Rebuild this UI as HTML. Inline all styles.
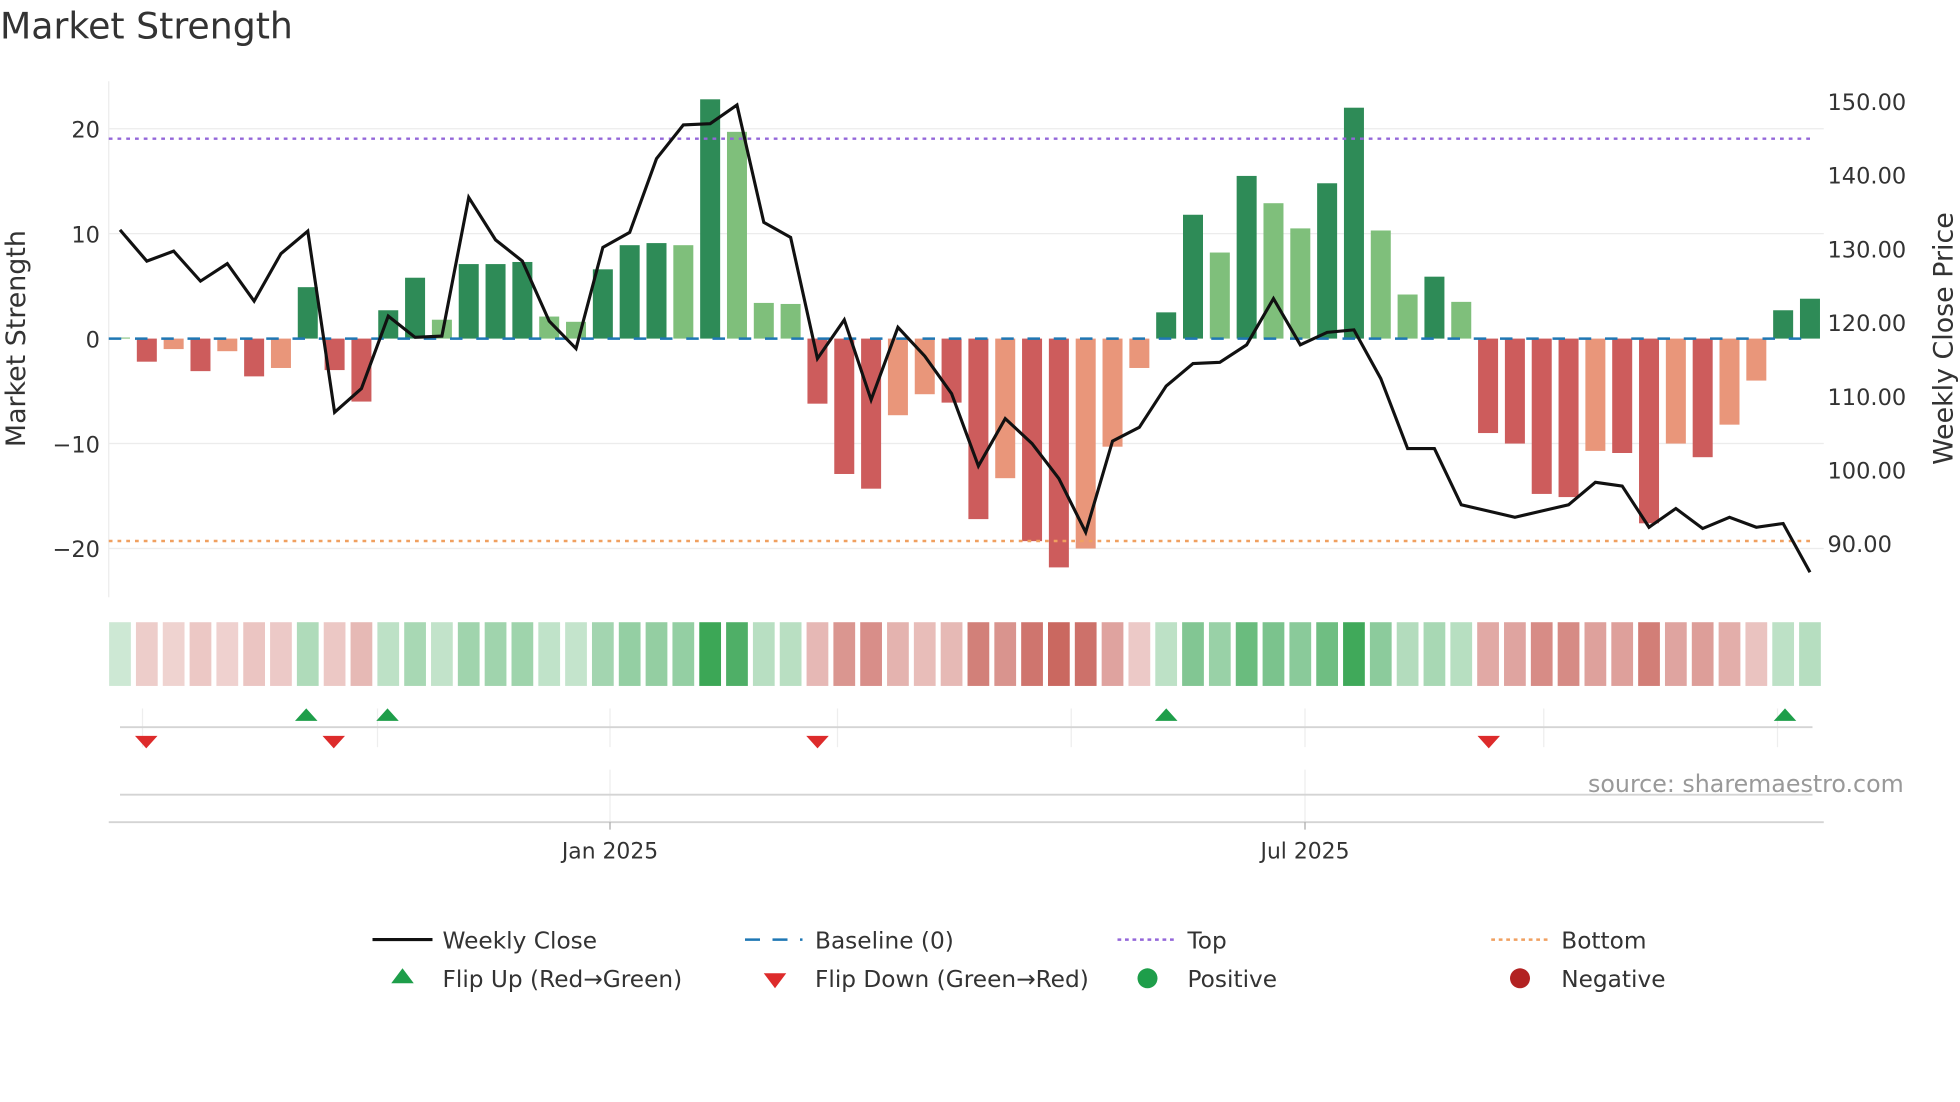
<!DOCTYPE html>
<html><head><meta charset="utf-8"><style>
html,body{margin:0;padding:0;background:#fff;width:1960px;height:1102px;overflow:hidden}
svg{display:block}
text{font-family:"DejaVu Sans","Liberation Sans",sans-serif}
</style></head><body>
<svg id="s" width="1960" height="1102" viewBox="0 0 1568 882" preserveAspectRatio="none" xmlns="http://www.w3.org/2000/svg">
<rect width="1568" height="882" fill="#fff"/>
<text x="0" y="31" font-size="29" fill="#333">Market Strength</text>
<g stroke="#ececec" stroke-width="1">
<line x1="87" x2="1459" y1="103" y2="103"/><line x1="87" x2="1459" y1="187" y2="187"/>
<line x1="87" x2="1459" y1="355" y2="355"/><line x1="87" x2="1459" y1="439" y2="439"/>
<line x1="87" x2="87" y1="65" y2="478"/>
</g>
<g font-size="18" fill="#333" text-anchor="end">
<text x="80" y="110">20</text><text x="80" y="194">10</text><text x="80" y="278">0</text>
<text x="80" y="362">−10</text><text x="80" y="446">−20</text>
</g>
<g font-size="18" fill="#333">
<text x="1462" y="88">150.00</text><text x="1462" y="147">140.00</text><text x="1462" y="206">130.00</text>
<text x="1462" y="265">120.00</text><text x="1462" y="324">110.00</text><text x="1462" y="383">100.00</text><text x="1462" y="442">90.00</text>
</g>
<text transform="translate(20,271) rotate(-90)" font-size="21.5" fill="#333" text-anchor="middle">Market Strength</text>
<text transform="translate(1562,271) rotate(-90)" font-size="21.5" fill="#333" text-anchor="middle">Weekly Close Price</text>
<g id="bars"></g>
<line x1="87" x2="1450" y1="271" y2="271" stroke="#1f77b4" stroke-width="2" stroke-dasharray="10,11"/>
<line x1="87" x2="1450" y1="111" y2="111" stroke="#9467d9" stroke-width="2" stroke-dasharray="3,4"/>
<line x1="87" x2="1450" y1="433" y2="433" stroke="#f0a060" stroke-width="2" stroke-dasharray="3,4"/>
<polyline id="price" fill="none" stroke="#111" stroke-width="2.5" stroke-linejoin="miter"/>
<g id="heat"></g>
<g stroke="#eee" stroke-width="1">
<line x1="114" x2="114" y1="567" y2="598"/><line x1="302" x2="302" y1="567" y2="598"/><line x1="488" x2="488" y1="567" y2="598"/>
<line x1="670" x2="670" y1="567" y2="598"/><line x1="857" x2="857" y1="567" y2="598"/><line x1="1044" x2="1044" y1="567" y2="598"/>
<line x1="1235" x2="1235" y1="567" y2="598"/><line x1="1422" x2="1422" y1="567" y2="598"/>
<line x1="488" x2="488" y1="616" y2="658"/><line x1="1044" x2="1044" y1="616" y2="658"/>
</g>
<line x1="96" x2="1450" y1="582" y2="582" stroke="#d4d4d4" stroke-width="1.5"/>
<line x1="96" x2="1450" y1="636" y2="636" stroke="#d4d4d4" stroke-width="1.5"/>
<line x1="87" x2="1459" y1="658" y2="658" stroke="#d4d4d4" stroke-width="1.5"/>
<line x1="488" x2="488" y1="658" y2="664" stroke="#aaa"/><line x1="1044" x2="1044" y1="658" y2="664" stroke="#aaa"/>
<g fill="#1e9e4a">
<path d="M245 567 l-9 10 h18z"/><path d="M310 567 l-9 10 h18z"/><path d="M933 567 l-9 10 h18z"/><path d="M1428 567 l-9 10 h18z"/>
</g>
<g fill="#dd2b2b">
<path d="M117 599 l-9 -10 h18z"/><path d="M267 599 l-9 -10 h18z"/><path d="M654 599 l-9 -10 h18z"/><path d="M1191 599 l-9 -10 h18z"/>
</g>
<text x="1523" y="634" font-size="19" fill="#999" text-anchor="end">source: sharemaestro.com</text>
<text x="488" y="687" font-size="17.5" fill="#333" text-anchor="middle">Jan 2025</text>
<text x="1044" y="687" font-size="17.5" fill="#333" text-anchor="middle">Jul 2025</text>
<g font-size="18.6" fill="#333">
<line x1="298" x2="346" y1="752" y2="752" stroke="#111" stroke-width="2.5"/><text x="354" y="759">Weekly Close</text>
<line x1="596" x2="642" y1="752" y2="752" stroke="#1f77b4" stroke-width="2" stroke-dasharray="12,10"/><text x="652" y="759">Baseline (0)</text>
<line x1="894" x2="940" y1="752" y2="752" stroke="#9467d9" stroke-width="2" stroke-dasharray="3,3"/><text x="950" y="759">Top</text>
<line x1="1193" x2="1239" y1="752" y2="752" stroke="#f0a060" stroke-width="2" stroke-dasharray="3,3"/><text x="1249" y="759">Bottom</text>
<path d="M322 775 l-9 12 h18z" fill="#1e9e4a"/><text x="354" y="790">Flip Up (Red→Green)</text>
<path d="M620 791 l-9 -12 h18z" fill="#dd2b2b"/><text x="652" y="790">Flip Down (Green→Red)</text>
<circle cx="918" cy="783" r="8" fill="#1e9e4a"/><text x="950" y="790">Positive</text>
<circle cx="1216" cy="783" r="8" fill="#b22222"/><text x="1249" y="790">Negative</text>
</g>
</svg>
<script>
var v=[0.1,-2.2,-1,-3.1,-1.2,-3.6,-2.8,4.9,-3,-6,2.7,5.8,1.8,7.1,7.1,7.3,2.1,1.6,6.6,8.9,9.1,8.9,22.8,19.7,3.4,3.3,-6.2,-12.9,-14.3,-7.3,-5.3,-6.1,-17.2,-13.3,-19.3,-21.8,-20,-10.3,-2.8,2.5,11.8,8.2,15.5,12.9,10.5,14.8,22,10.3,4.2,5.9,3.5,-9,-10,-14.8,-15.1,-10.7,-10.9,-17.6,-10,-11.3,-8.2,-4,2.7,3.8];
var t=[0,1,0,1,0,1,0,1,1,1,1,1,0,1,1,1,0,0,1,1,1,0,1,0,0,0,1,1,1,0,0,1,1,0,1,1,0,0,0,1,1,0,1,0,0,1,1,0,0,1,0,1,1,1,1,0,1,1,0,1,0,0,1,1];
var p=[184,209,201,225,211,241,203,185,330,311,253,270,269,158,192,209,257,279,198,186,127,100,99,84,178,190,287,256,320,262,285,315,373,335,355,383,426,353,342,309,291,290,276,239,276,266,264,303,359,359,404,409,414,409,404,386,389,422,407,423,414,422,419,458];
var ns="http://www.w3.org/2000/svg",b=document.getElementById("bars"),h=document.getElementById("heat"),pts=[];
for(var i=0;i<64;i++){var x=96+21.46*i,y0=271,hh=v[i]*8.4;
var r=document.createElementNS(ns,"rect");r.setAttribute("x",x-8);r.setAttribute("width",16);
r.setAttribute("y",hh>0?y0-hh:y0);r.setAttribute("height",Math.abs(hh));
r.setAttribute("fill",v[i]>=0?(t[i]?"#2e8b57":"#7fbf7b"):(t[i]?"#cd5c5c":"#e9967a"));b.appendChild(r);
var c=document.createElementNS(ns,"rect");c.setAttribute("x",x-8.7);c.setAttribute("width",17.4);c.setAttribute("y",498);c.setAttribute("height",51);
var a=0.25+0.75*Math.abs(v[i])/23;c.setAttribute("fill",v[i]>=0?"#3aa655":"#c8625a");c.setAttribute("fill-opacity",a);h.appendChild(c);
pts.push(x+","+p[i]);}
document.getElementById("price").setAttribute("points",pts.join(" "));
</script>
</body></html>
